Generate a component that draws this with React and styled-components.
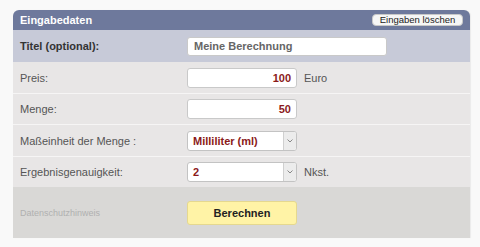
import React from 'react'
import styled, { createGlobalStyle } from 'styled-components'

const Global = createGlobalStyle`
    body {
        margin: 0;
        background: #f9f9f9;
        font-family: "Liberation Sans", Arial, sans-serif;
    }
`;

const Page = styled.div`
    padding: 10px 10px 10px 13px;
`;

const Panel = styled.div`
    width: 457px;
    border-radius: 6px 6px 0 0;
    overflow: hidden;
    box-shadow: 1px 0 1px rgba(0,0,0,0.06);
`;

const Header = styled.div`
    height: 20px;
    background: #6e799c;
    display: flex;
    align-items: center;
    justify-content: space-between;
    padding: 0 7px 0 7px;
`;

const HeaderTitle = styled.span`
    color: #fff;
    font-weight: bold;
    font-size: 11px;
`;

const ClearButton = styled.button`
    height: 12px;
    width: 91px;
    padding: 0;
    border: 1px solid #c8c8c8;
    border-radius: 4px;
    background: #f6f6f6;
    font-family: inherit;
    font-size: 9.5px;
    color: #222;
    line-height: 10px;
`;

const Row = styled.div`
    display: flex;
    align-items: center;
    height: ${p => p.$h || 31}px;
    background: ${p => p.$bg || '#e8e6e6'};
    border-top: ${p => p.$line ? '1px solid #f6f5f5' : 'none'};
    padding-left: 7px;
    box-sizing: border-box;
`;

const Label = styled.div`
    width: 167px;
    font-size: ${p => p.$small ? '9px' : '11px'};
    font-weight: ${p => p.$bold ? 'bold' : 'normal'};
    color: ${p => p.$small ? '#b0b0b0' : p.$bold ? '#333' : '#555'};
`;

const TextInput = styled.div`
    width: ${p => p.$w}px;
    height: ${p => p.$ht || 20}px;
    box-sizing: border-box;
    background: #fff;
    border: 1px solid #c9c9c9;
    border-radius: 3px;
    display: flex;
    align-items: center;
    justify-content: ${p => p.$right ? 'flex-end' : 'flex-start'};
    padding: 0 5px 0 6px;
    font-size: 11px;
    font-weight: bold;
    color: ${p => p.$plain ? '#666' : '#8b1a1a'};
`;

const Select = styled.div`
    width: 110px;
    height: 20px;
    box-sizing: border-box;
    background: #fff;
    border: 1px solid #c3c3c3;
    border-radius: 3px;
    display: flex;
    overflow: hidden;
`;

const SelectValue = styled.div`
    flex: 1;
    display: flex;
    align-items: center;
    padding-left: 5px;
    font-size: 11px;
    font-weight: bold;
    color: #8b1a1a;
`;

const SelectArrow = styled.div`
    width: 12px;
    background: #ececec;
    border-left: 1px solid #d0d0d0;
    display: flex;
    align-items: center;
    justify-content: center;
`;

const Unit = styled.span`
    margin-left: 7px;
    font-size: 11px;
    color: #555;
`;

const CalcButton = styled.button`
    width: 110px;
    height: 24px;
    border: 1px solid #e5d88f;
    border-radius: 3px;
    background: #fff3a6;
    font-family: inherit;
    font-size: 11px;
    font-weight: bold;
    color: #222;
    padding: 0;
`;

const Arrow = () => (
    <svg width="6" height="4" viewBox="0 0 6 4">
        <path d="M0.5 0.5 L3 3 L5.5 0.5" fill="none" stroke="#888" strokeWidth="1" />
    </svg>
)

export default function App() {
    return (
        <Page>
            <Global />
            <Panel>
                <Header>
                    <HeaderTitle>Eingabedaten</HeaderTitle>
                    <ClearButton>Eingaben löschen</ClearButton>
                </Header>
                <Row $bg="#c7cad8" $h={32}>
                    <Label $bold>Titel (optional):</Label>
                    <TextInput $w={200} $ht={19} $plain>Meine Berechnung</TextInput>
                </Row>
                <Row>
                    <Label>Preis:</Label>
                    <TextInput $w={110} $right>100</TextInput>
                    <Unit>Euro</Unit>
                </Row>
                <Row $line>
                    <Label>Menge:</Label>
                    <TextInput $w={110} $right>50</TextInput>
                </Row>
                <Row $line $h={32}>
                    <Label>Maßeinheit der Menge :</Label>
                    <Select>
                        <SelectValue>Milliliter (ml)</SelectValue>
                        <SelectArrow><Arrow /></SelectArrow>
                    </Select>
                </Row>
                <Row $line>
                    <Label>Ergebnisgenauigkeit:</Label>
                    <Select>
                        <SelectValue>2</SelectValue>
                        <SelectArrow><Arrow /></SelectArrow>
                    </Select>
                    <Unit>Nkst.</Unit>
                </Row>
                <Row $bg="#d9d8d6" $h={51}>
                    <Label $small>Datenschutzhinweis</Label>
                    <CalcButton>Berechnen</CalcButton>
                </Row>
            </Panel>
        </Page>
    )
}
